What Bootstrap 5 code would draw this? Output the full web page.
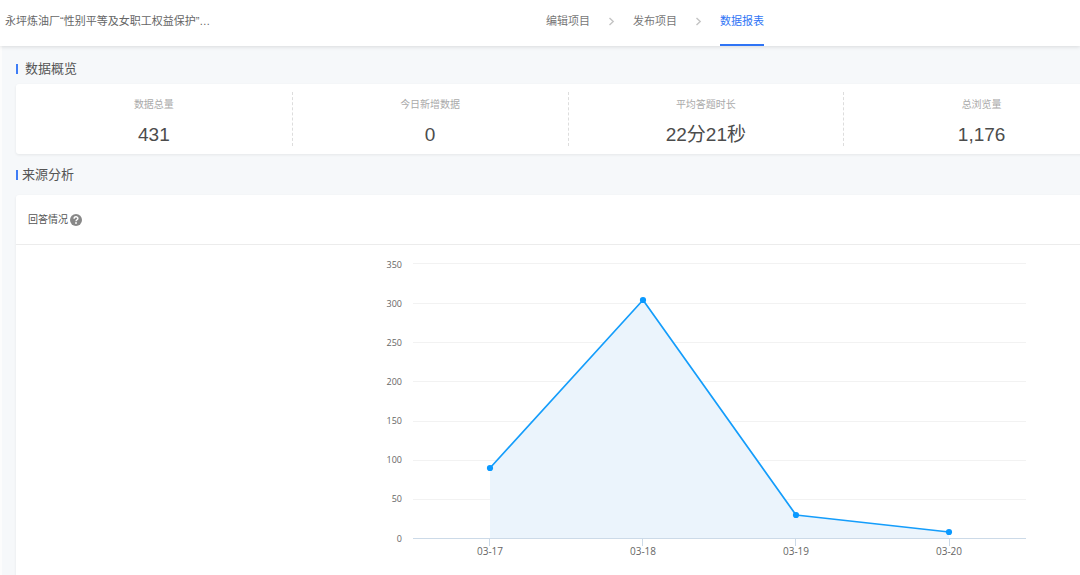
<!DOCTYPE html>
<html lang="zh-CN">
<head>
<meta charset="utf-8">
<meta name="viewport" content="width=device-width, initial-scale=1">
<title>数据报表</title>
<link href="https://cdn.jsdelivr.net/npm/bootstrap@5.3.0/dist/css/bootstrap.min.css" rel="stylesheet">
<style>
body { font-family: "Liberation Sans", "Noto Sans CJK SC", sans-serif; background: #f6f8fa; color: #555; overflow-x: hidden; }
.topbar { height: 46px; font-size: 11px; line-height: 42px; box-shadow: 0 1px 4px rgba(0,0,0,.12); z-index: 2; }
.project-title { flex: 1 1 0; padding-left: 5px; color: #666; }
.steps { gap: 18px; }
.steps a { color: #777; text-decoration: none; height: 46px; }
.steps a.active { color: #2f74f5; border-bottom: 2px solid #2f74f5; }
.steps svg { margin-bottom: 4px; }
.steps-end { flex: 1 1 0; max-width: 316px; }
.page-body { border-left: 2px solid #fcfcfc; overflow: hidden; height: calc(100vh - 46px); min-height: 529px; }
/* the report is wider than the window and runs off its right side */
.report { margin-right: -39px; padding: 13px 0 0 14px; }
.section-title { font-size: 13px; line-height: 20px; font-weight: 400; color: #555; gap: 4px; margin: 0 0 10px; }
.section-title::before { content: ""; width: 2px; height: 10px; background: #3f7df6; }
.section-title.wide { gap: 7px; margin-bottom: 5px; }
.panel { border: 0; border-radius: 3px; box-shadow: 0 1px 3px rgba(0,0,0,.07); }
.stats { margin-bottom: 11px; }
.stat { padding-top: 4px; }
.stat + .stat { border-left: 1px dashed #ddd; }
.stat dt { font-size: 10px; line-height: 18px; font-weight: 400; color: #aaa; }
.stat dd { font-size: 19px; line-height: 22px; color: #4c4c4c; margin: 10px 0 0; }
.panel-head { height: 50px; padding: 0 12px; font-size: 10px; border-bottom: 1px solid #ececec; gap: 2px; }
.chart { padding: 5px 79px 20px 0; }
.chart text { font: 9px "Open Sans", sans-serif; fill: #666; }
.chart .dates text { font-size: 10px; }
</style>
</head>
<body>
<header class="topbar bg-white d-flex position-relative">
  <div class="project-title text-nowrap">永坪炼油厂“性别平等及女职工权益保护”…</div>
  <nav class="steps d-flex align-items-center" aria-label="项目步骤">
    <a href="#">编辑项目</a>
    <svg width="7" height="9" viewBox="0 0 7 9" fill="none" stroke="#c4c4c4" stroke-width="1.4"><path d="M1.5 1 5.2 4.5 1.5 8"/></svg>
    <a href="#">发布项目</a>
    <svg width="7" height="9" viewBox="0 0 7 9" fill="none" stroke="#c4c4c4" stroke-width="1.4"><path d="M1.5 1 5.2 4.5 1.5 8"/></svg>
    <a href="#" class="active" aria-current="page">数据报表</a>
  </nav>
  <div class="steps-end"></div>
</header>
<main class="page-body">
  <div class="report">
    <h2 class="section-title wide d-flex align-items-center">数据概览</h2>
    <dl class="stats card panel flex-row py-2">
      <div class="stat col-3 text-center"><dt>数据总量</dt><dd>431</dd></div>
      <div class="stat col-3 text-center"><dt>今日新增数据</dt><dd>0</dd></div>
      <div class="stat col-3 text-center"><dt>平均答题时长</dt><dd>22分21秒</dd></div>
      <div class="stat col-3 text-center"><dt>总浏览量</dt><dd>1,176</dd></div>
    </dl>
    <h2 class="section-title d-flex align-items-center">来源分析</h2>
    <section class="card panel">
      <div class="panel-head d-flex align-items-center">
        <span>回答情况</span>
        <svg width="12" height="12" viewBox="0 0 12 12" fill="none" role="img" aria-label="帮助"><circle cx="6" cy="6" r="6" fill="#888"/><path d="M4.1 4.7C4.1 2.2 7.9 2.2 7.9 4.5 7.9 5.8 6 5.8 6 7.3" stroke="#fff" stroke-width="1.4"/><circle cx="6" cy="9" r=".9" fill="#fff"/></svg>
      </div>
      <div class="chart d-flex justify-content-end">
        <svg width="660" height="325" viewBox="380 250 660 325" role="img" aria-label="回答情况">
          <path d="M413 263.5H1026M413 303.5H1026M413 342.5H1026M413 381.5H1026M413 421.5H1026M413 460.5H1026M413 499.5H1026" stroke="#f2f2f2"/>
          <path d="M490 468 643 300 796 515 949 532V538H490Z" fill="#ebf4fc"/>
          <path d="M413 538.5H1026M489.5 538V546M642.5 538V546M795.5 538V546M949.5 538V546" stroke="#ccdae8"/>
          <path d="M490 468 643 300 796 515 949 532" fill="none" stroke="#149dfb" stroke-width="1.7" stroke-linejoin="round"/>
          <g fill="#0a99ff"><circle cx="490" cy="468" r="3.1"/><circle cx="643" cy="300" r="3.1"/><circle cx="796" cy="515" r="3.1"/><circle cx="949" cy="532" r="3.1"/></g>
          <g text-anchor="end">
            <text x="402" y="268">350</text><text x="402" y="307">300</text><text x="402" y="346">250</text><text x="402" y="385">200</text><text x="402" y="424">150</text><text x="402" y="463">100</text><text x="402" y="502">50</text><text x="402" y="542">0</text>
          </g>
          <g class="dates" text-anchor="middle">
            <text x="490" y="555">03-17</text><text x="643" y="555">03-18</text><text x="796" y="555">03-19</text><text x="949" y="555">03-20</text>
          </g>
        </svg>
      </div>
    </section>
  </div>
</main>
<script src="https://cdn.jsdelivr.net/npm/bootstrap@5.3.0/dist/js/bootstrap.bundle.min.js"></script>
</body>
</html>
